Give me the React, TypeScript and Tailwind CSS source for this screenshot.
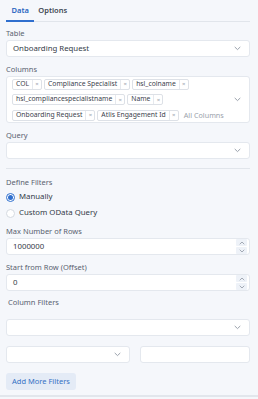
import React from "react";

const Chevron = ({ className = "" }: { className?: string }) => (
  <svg width="7" height="5" viewBox="0 0 7 5" className={className} fill="none">
    <path d="M1 1.2 L3.5 3.6 L6 1.2" stroke="#8f97a3" strokeWidth="0.9" strokeLinecap="round" strokeLinejoin="round" />
  </svg>
);

const Label = ({ children, className = "" }: { children: React.ReactNode; className?: string }) => (
  <div className={"h-[12px] flex items-center text-[7.5px] text-[#5a6270] leading-none " + className}>{children}</div>
);

const Select = ({ value = "", className = "" }: { value?: string; className?: string }) => (
  <div className={"h-[17px] bg-white border border-[#e4e8ee] rounded-[3px] flex items-center justify-between pl-[6px] pr-[8px] text-[7.8px] text-[#333b47] " + className}>
    <span>{value}</span>
    <Chevron />
  </div>
);

const Chip = ({ text }: { text: string }) => (
  <div className="h-[11px] flex items-stretch border border-[#dde1e7] bg-white rounded-[2px] text-[6.8px] text-[#3a414c] leading-none">
    <span className="flex items-center px-[3px]">{text}</span>
    <span className="flex items-center justify-center w-[9px] border-l border-[#e6e9ee] text-[6px] text-[#9aa1ab]">×</span>
  </div>
);

const Spinner = () => (
  <div className="flex flex-col gap-[1px] mr-[2px]">
    <div className="w-[11px] h-[7px] bg-[#eef2f8] rounded-[1px] flex items-center justify-center">
      <svg width="6" height="4" viewBox="0 0 6 4" fill="none"><path d="M1 3 L3 1 L5 3" stroke="#8f97a3" strokeWidth="0.8" strokeLinecap="round" /></svg>
    </div>
    <div className="w-[11px] h-[7px] bg-[#eef2f8] rounded-[1px] flex items-center justify-center">
      <svg width="6" height="4" viewBox="0 0 6 4" fill="none"><path d="M1 1 L3 3 L5 1" stroke="#8f97a3" strokeWidth="0.8" strokeLinecap="round" /></svg>
    </div>
  </div>
);

const NumberInput = ({ value }: { value: string }) => (
  <div className="h-[17px] bg-white border border-[#e4e8ee] rounded-[3px] flex items-center justify-between pl-[6px] text-[7.8px] text-[#333b47]">
    <span>{value}</span>
    <Spinner />
  </div>
);

export default function App() {
  return (
    <div className="w-[258px] h-[399px] bg-[#f5f7fb] overflow-hidden font-['Noto_Sans',sans-serif]">
      <div className="pl-[6px] pr-[8px] h-[395px]">
        {/* Tabs */}
        <div className="h-[22px] flex items-end border-b border-[#e1e5eb]">
          <div className="h-[21px] px-[5.5px] flex items-center border-b-2 border-[#2f6fce] -mb-[1px] text-[7.5px] font-semibold text-[#2563c0]">Data</div>
          <div className="h-[21px] pl-[4px] flex items-center text-[7.5px] font-semibold text-[#3f4853]">Options</div>
        </div>

        <Label className="mt-[6px]">Table</Label>
        <Select value="Onboarding Request" />

        <Label className="mt-[7px]">Columns</Label>
        <div className="h-[47px] bg-white border border-[#e4e8ee] rounded-[3px] flex items-center pl-[5px] pr-[8px]">
          <div className="flex-1 flex flex-wrap gap-x-[2px] gap-y-[4.5px] items-center">
            <Chip text="COL" />
            <Chip text="Compliance Specialist" />
            <Chip text="hsl_colname" />
            <Chip text="hsl_compliancespecialistname" />
            <Chip text="Name" />
            <Chip text="Onboarding Request" />
            <Chip text="Atlis Engagement Id" />
            <span className="ml-[3px] text-[7.2px] text-[#9aa1ab]">All Columns</span>
          </div>
          <Chevron />
        </div>

        <Label className="mt-[7px]">Query</Label>
        <Select />

        <div className="mt-[9px] h-[1px] bg-[#e1e5eb]" />

        <Label className="mt-[8px]">Define Filters</Label>
        <div className="mt-[2px] h-[12px] flex items-center gap-[4px] text-[7.8px] text-[#333b47]">
          <div className="w-[9px] h-[9px] rounded-full border border-[#2f6fce] bg-white flex items-center justify-center">
            <div className="w-[5px] h-[5px] rounded-full bg-[#2f6fce]" />
          </div>
          <span>Manually</span>
        </div>
        <div className="mt-[4px] h-[12px] flex items-center gap-[4px] text-[7.8px] text-[#333b47]">
          <div className="w-[9px] h-[9px] rounded-full border border-[#d5dae1] bg-white" />
          <span>Custom OData Query</span>
        </div>

        <Label className="mt-[7px]">Max Number of Rows</Label>
        <NumberInput value="1000000" />

        <Label className="mt-[7px]">Start from Row (Offset)</Label>
        <NumberInput value="0" />

        <Label className="mt-[6px] pl-[2px]">Column Filters</Label>
        <Select className="mt-[10px]" />

        <div className="mt-[10px] flex gap-[10px]">
          <Select className="flex-1" />
          <div className="flex-1 h-[17px] bg-white border border-[#e4e8ee] rounded-[3px]" />
        </div>

        <button className="mt-[10px] h-[17px] px-[6px] bg-[#e4ebf6] rounded-[3px] text-[7.5px] text-[#3470c4] flex items-center">Add More Filters</button>
      </div>
      <div className="h-[2px] bg-[#e2e6ec]" />
    </div>
  );
}
